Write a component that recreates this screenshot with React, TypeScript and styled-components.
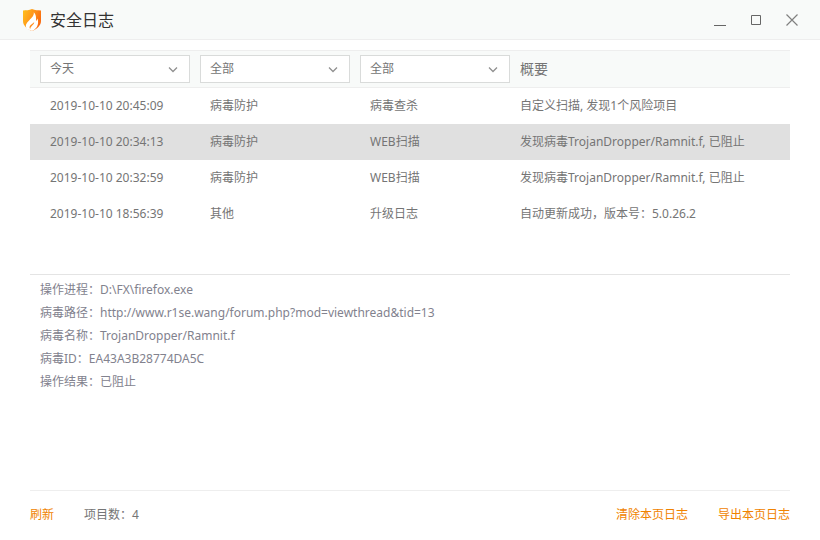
import React, { useState } from "react";
import styled, { createGlobalStyle } from "styled-components";

const GlobalStyle = createGlobalStyle`
  *, *::before, *::after { box-sizing: border-box; }
  body {
    margin: 0;
    background: #fff;
    color: #757575;
    font: 12px/16px "Noto Sans", "Noto Sans CJK SC", sans-serif;
  }
  button, select { font: inherit; color: inherit; }
`;

const Window = styled.div`
  display: flex;
  flex-direction: column;
  min-height: 100vh;
`;

const TitleBar = styled.header`
  display: flex;
  align-items: center;
  height: 40px;
  padding: 0 10px 0 22px;
  background: #f8faf9;
  border-bottom: 1px solid #eee;
`;

const Title = styled.h1`
  flex: 1;
  margin: 0 0 0 8px;
  color: #333;
  font-size: 16px;
  line-height: 24px;
  font-weight: 400;
`;

const WindowButton = styled.button`
  width: 36px;
  height: 39px;
  padding: 0;
  border: 0;
  background: none;
  svg { display: block; margin: auto; }
`;

const Content = styled.main`
  flex: 1;
  display: flex;
  flex-direction: column;
  padding: 10px 30px 0;
`;

const LogTable = styled.table`
  width: 100%;
  margin-bottom: 42px;
  border-collapse: separate;
  border-spacing: 0;
  table-layout: fixed;
`;

const HeadCell = styled.th<{ $wide?: boolean }>`
  width: ${(p) => (p.$wide ? "auto" : "160px")};
  height: 38px;
  padding: 0 0 0 10px;
  background: #f8faf9;
  border: solid #eee;
  border-width: 1px 0;
  text-align: left;
  font-size: 14px;
  line-height: 20px;
  font-weight: 400;
`;

const SelectBox = styled.div`
  position: relative;
  font-size: 12px;
  svg {
    position: absolute;
    right: 12px;
    top: 11px;
    pointer-events: none;
  }
`;

const Select = styled.select`
  display: block;
  width: 100%;
  height: 28px;
  padding: 0 30px 0 9px;
  appearance: none;
  background: #fff;
  border: 1px solid #d9dbda;
  border-radius: 0;
`;

const LogRow = styled.tr<{ $selected: boolean }>`
  background: ${(p) => (p.$selected ? "#e0e0e0" : "#fff")};
  cursor: default;
`;

const Cell = styled.td`
  height: 36px;
  padding: 0 0 0 20px;
  white-space: nowrap;
  &:last-child { padding-left: 10px; }
`;

const Details = styled.section`
  flex: 1;
  padding: 3px 10px;
  border-top: 1px solid #e4e4e4;
  color: #82828e;
  line-height: 23px;
`;

const DetailLine = styled.p`
  margin: 0;
`;

const Footer = styled.footer`
  display: flex;
  align-items: center;
  gap: 30px;
  height: 50px;
  padding-bottom: 2px;
  border-top: 1px solid #eee;
`;

const Count = styled.span`
  flex: 1;
`;

const TextButton = styled.button`
  padding: 0;
  border: 0;
  background: none;
  color: #f08300;
  cursor: pointer;
`;

const Logo = () => (
  <svg width="20" height="24" viewBox="0 0 20 24" aria-hidden="true">
    <defs>
      <linearGradient id="shield" x1="0" y1="0" x2="1" y2="0.5">
        <stop offset="0" stopColor="#ffc21c" />
        <stop offset="0.5" stopColor="#ff981b" />
        <stop offset="1" stopColor="#f96a10" />
      </linearGradient>
    </defs>
    <path d="M10 1C7 2.2 4 2.4 1 2.4V13c0 4.500 4 8 9 10 5-2 9-5.500 9-10V2.400C16 2.400 13 2.200 10 1z" fill="url(#shield)" />
    <path
      d="M11.800 4.300c.3 3.400-1.800 5.200-4.300 7.600-3.200 3-5 6-2.300 9L10 23l2-1c3.600-2.600 5-6.500 3.500-11.400-.3 1.200-.8 1.900-1.500 2.400.3-3.600 0-6.500-2.200-8.700z"
      fill="#fff"
    />
    <path d="M12.200 14c0 1.900-1.200 2.700-2.400 3.900-1.300 1.300-1.800 2.300-1.300 3.400-1.400-1.500-1.200-3 .2-4.400 1.300-1.100 2.700-1.700 3.500-2.900z" fill="#ff8a18" />
  </svg>
);

const Chevron = () => (
  <svg width="10" height="7" viewBox="0 0 10 7" fill="none" stroke="#909090" strokeWidth="1.3" aria-hidden="true">
    <path d="M1 1.5 5 5.5 9 1.5" />
  </svg>
);

const filters = [
  { label: "日期", options: ["今天", "最近三天", "最近一周", "全部"] },
  { label: "类别", options: ["全部", "病毒防护", "其他"] },
  { label: "功能", options: ["全部", "病毒查杀", "WEB扫描", "升级日志"] },
];

const logs = [
  ["2019-10-10 20:45:09", "病毒防护", "病毒查杀", "自定义扫描, 发现1个风险项目"],
  ["2019-10-10 20:34:13", "病毒防护", "WEB扫描", "发现病毒TrojanDropper/Ramnit.f, 已阻止"],
  ["2019-10-10 20:32:59", "病毒防护", "WEB扫描", "发现病毒TrojanDropper/Ramnit.f, 已阻止"],
  ["2019-10-10 18:56:39", "其他", "升级日志", "自动更新成功，版本号：5.0.26.2"],
];

const details = [
  "操作进程：D:\\FX\\firefox.exe",
  "病毒路径：http://www.r1se.wang/forum.php?mod=viewthread&tid=13",
  "病毒名称：TrojanDropper/Ramnit.f",
  "病毒ID：EA43A3B28774DA5C",
  "操作结果：已阻止",
];

export default function App() {
  const [selected, setSelected] = useState(1);

  return (
    <Window lang="zh-CN">
      <GlobalStyle />
      <TitleBar>
        <Logo />
        <Title>安全日志</Title>
        <WindowButton aria-label="最小化">
          <svg width="12" height="12" stroke="#666"><path d="M0 11.5h12" /></svg>
        </WindowButton>
        <WindowButton aria-label="最大化">
          <svg width="12" height="12" stroke="#666" fill="none"><path d="M1.5 1.5h9v9h-9z" /></svg>
        </WindowButton>
        <WindowButton aria-label="关闭">
          <svg width="12" height="12" stroke="#808080" strokeWidth="1.2"><path d="M.5.5l11 11m0-11-11 11" /></svg>
        </WindowButton>
      </TitleBar>
      <Content>
        <LogTable>
          <thead>
            <tr>
              {filters.map((filter) => (
                <HeadCell key={filter.label} scope="col">
                  <SelectBox>
                    <Select aria-label={filter.label}>
                      {filter.options.map((option) => (
                        <option key={option}>{option}</option>
                      ))}
                    </Select>
                    <Chevron />
                  </SelectBox>
                </HeadCell>
              ))}
              <HeadCell $wide scope="col">概要</HeadCell>
            </tr>
          </thead>
          <tbody>
            {logs.map((log, index) => (
              <LogRow key={log[0]} $selected={index === selected} onClick={() => setSelected(index)}>
                {log.map((text, column) => (
                  <Cell key={column}>{text}</Cell>
                ))}
              </LogRow>
            ))}
          </tbody>
        </LogTable>
        <Details>
          {details.map((line) => (
            <DetailLine key={line}>{line}</DetailLine>
          ))}
        </Details>
        <Footer>
          <TextButton>刷新</TextButton>
          <Count>项目数：4</Count>
          <TextButton>清除本页日志</TextButton>
          <TextButton>导出本页日志</TextButton>
        </Footer>
      </Content>
    </Window>
  );
}
